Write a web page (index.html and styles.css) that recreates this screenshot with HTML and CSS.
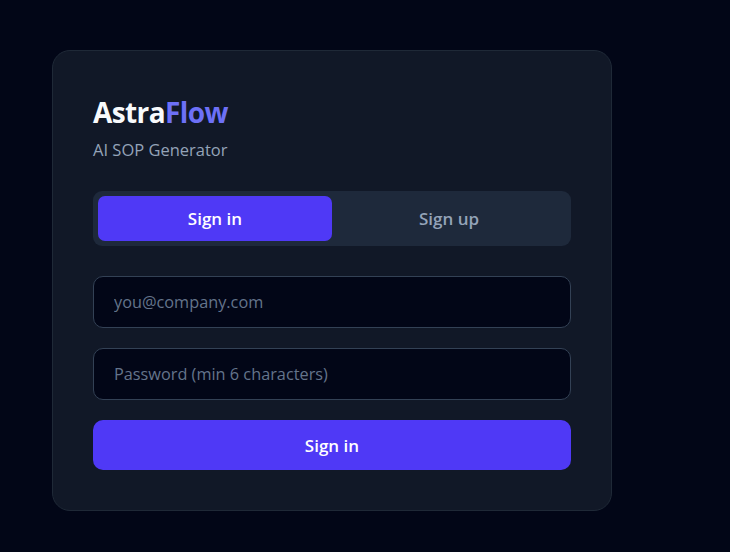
FILE: index.html
```html
<!DOCTYPE html>
<html>
<head>
<meta charset="utf-8">
<link rel="stylesheet" href="styles.css">
</head>
<body>
<main class="page">
  <section class="card">
    <h1 class="brand">Astra<span class="brand-accent">Flow</span></h1>
    <p class="tagline">AI SOP Generator</p>
    <div class="tabs">
      <button class="tab tab-active">Sign in</button>
      <button class="tab">Sign up</button>
    </div>
    <form class="form">
      <input class="field" type="email" placeholder="you@company.com">
      <input class="field" type="password" placeholder="Password (min 6 characters)">
      <button class="submit" type="button">Sign in</button>
    </form>
  </section>
</main>
</body>
</html>
```
FILE: styles.css
```css
* { box-sizing: border-box; }
html, body { margin: 0; padding: 0; }
body {
  background: #020617;
  font-family: "Open Sans", "Noto Sans", sans-serif;
  color: #e2e8f0;
  min-height: 552px;
}
.page {
  padding: 50px 0 0 52px;
}
.card {
  width: 560px;
  background: #111827;
  border: 1px solid #1f2937;
  border-radius: 18px;
  padding: 40px 40px 40px 40px;
}
.brand {
  margin: 4px 0 0 0;
  font-size: 28px;
  font-weight: 700;
  line-height: 34px;
  color: #f8fafc;
  letter-spacing: -0.6px;
}
.brand-accent { color: #6d70f6; }
.tagline {
  margin: 10px 0 0 0;
  font-size: 16.5px;
  line-height: 22px;
  color: #94a3b8;
}
.tabs {
  margin-top: 30px;
  display: flex;
  background: #1e293b;
  border-radius: 9px;
  padding: 5px;
}
.tab {
  flex: 1;
  height: 45px;
  border: 0;
  border-radius: 7px;
  background: transparent;
  font-family: inherit;
  font-size: 17px;
  font-weight: 600;
  color: #94a3b8;
}
.tab-active {
  background: #4f39f6;
  color: #ffffff;
}
.form {
  margin-top: 30px;
  display: flex;
  flex-direction: column;
  gap: 20px;
}
.field {
  height: 52px;
  background: #020617;
  border: 1px solid #334155;
  border-radius: 10px;
  padding: 0 20px;
  font-family: inherit;
  font-size: 16.3px;
  color: #e2e8f0;
  outline: none;
}
.field::placeholder { color: #64748b; }
.submit {
  height: 50px;
  border: 0;
  border-radius: 10px;
  background: #4f39f6;
  color: #ffffff;
  font-family: inherit;
  font-size: 17px;
  font-weight: 600;
}
```
